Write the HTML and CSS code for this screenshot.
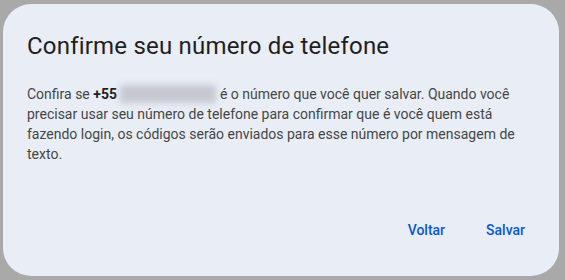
FILE: index.html
```html
<!DOCTYPE html>
<html lang="pt-BR">
<head>
    <meta charset="UTF-8">
    <title>Confirme seu número de telefone</title>
    <link rel="stylesheet" href="styles.css">
</head>
<body>
    <div class="dialog">
        <h1 class="dialog-title">Confirme seu número de telefone</h1>
        <p class="dialog-text">
            Confira se <b>+55</b> <span class="masked"></span> é o número que você quer salvar. Quando você precisar usar seu número de telefone para confirmar que é você quem está fazendo login, os códigos serão enviados para esse número por mensagem de texto.
        </p>
        <div class="dialog-actions">
            <button class="text-btn">Voltar</button>
            <button class="text-btn">Salvar</button>
        </div>
    </div>
</body>
</html>
```

FILE: styles.css
```css
body {
    margin: 0;
    height: 280px;
    background: #a9a9a9;
    font-family: Roboto, 'Noto Sans', sans-serif;
    display: flex;
}

.dialog {
    margin: 4px 6px 4px 3px;
    flex: 1;
    background: #e9edf6;
    border-radius: 28px;
    padding: 24px 26px 0 24px;
    display: flex;
    flex-direction: column;
}

.dialog-title {
    margin: 2px 0 0 0;
    font-size: 24px;
    font-weight: 400;
    line-height: 32px;
    letter-spacing: 0.2px;
    color: #1f1f1f;
}

.dialog-text {
    margin: 22px 0 0 0;
    font-size: 14px;
    line-height: 20px;
    color: #444746;
}

.dialog-text b {
    font-weight: 700;
    color: #1f1f1f;
}

.masked {
    display: inline-block;
    width: 96px;
    height: 18px;
    vertical-align: -4px;
    background: #c6c9cf;
    filter: blur(3px);
}

.dialog-actions {
    margin-top: auto;
    display: flex;
    justify-content: flex-end;
    gap: 25px;
    padding-bottom: 38px;
}

.text-btn {
    background: none;
    border: none;
    padding: 0 8px;
    font-family: inherit;
    font-size: 14px;
    font-weight: 500;
    color: #0b57d0;
    cursor: pointer;
}
```
